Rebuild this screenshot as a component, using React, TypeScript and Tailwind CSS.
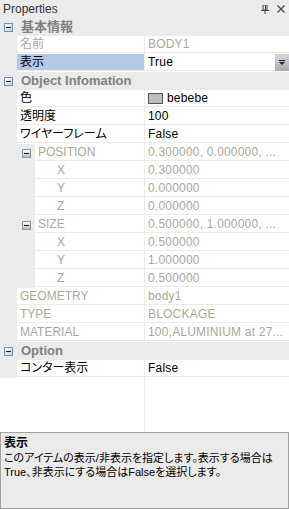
import React from "react";

const FONT = "font-['Liberation_Sans','Noto_Sans_CJK_JP',sans-serif]";
const JP = "text-[12px] [font-feature-settings:'palt']";

function CatIcon() {
  return (
    <svg width="9" height="9" viewBox="0 0 9 9" className="block">
      <defs>
        <linearGradient id="cg" x1="0" y1="0" x2="1" y2="1">
          <stop offset="0" stopColor="#ffffff" />
          <stop offset="1" stopColor="#c8ccd4" />
        </linearGradient>
      </defs>
      <rect x="0.5" y="0.5" width="8" height="8" fill="url(#cg)" stroke="#6f8fb5" />
      <rect x="2" y="4" width="5" height="1" fill="#1a1a1a" />
    </svg>
  );
}

function SubIcon() {
  return (
    <svg width="9" height="9" viewBox="0 0 9 9" className="block">
      <defs>
        <linearGradient id="sg" x1="0" y1="0" x2="0" y2="1">
          <stop offset="0" stopColor="#ffffff" />
          <stop offset="1" stopColor="#c9b58f" />
        </linearGradient>
      </defs>
      <rect x="0.5" y="0.5" width="8" height="8" fill="url(#sg)" stroke="#7b97bd" />
      <rect x="2" y="4" width="5" height="1" fill="#1a1a1a" />
    </svg>
  );
}

function Category({ label }: { label: string }) {
  return (
    <div className="flex h-[18px] items-center bg-[#ebebeb]">
      <div className="w-[17px] flex justify-center">
        <CatIcon />
      </div>
      <span className="pl-[4px] font-bold text-[#808080] text-[13px] [font-feature-settings:'palt']">{label}</span>
    </div>
  );
}

type RowProps = {
  name: string;
  value?: React.ReactNode;
  margin?: number;
  namePad?: string;
  disabled?: boolean;
  selected?: boolean;
  jp?: boolean;
  icon?: boolean;
  dropdown?: boolean;
};

function Row({ name, value, margin = 17, namePad = "pl-[3px]", disabled, selected, jp, icon, dropdown }: RowProps) {
  const color = disabled ? "text-[#aca899]" : "text-black";
  return (
    <div className="flex h-[18px]">
      <div className={(margin === 17 ? "w-[17px]" : "w-[35px]") + " shrink-0 bg-[#ebebeb] flex items-center"}>
        {icon && (
          <div className="ml-[22px]">
            <SubIcon />
          </div>
        )}
      </div>
      <div
        className={
          "flex h-[17px] items-center border-b border-[#ebebeb] shrink-0 " +
          (margin === 17 ? "w-[127px] " : "w-[109px] ") +
          (selected ? "bg-[#b5c9e7] " : "bg-white ") +
          namePad
        }
      >
        <span className={color + " whitespace-nowrap " + (jp ? JP : "text-[12px]")}>{name}</span>
      </div>
      <div className="w-px h-[18px] bg-[#ebebeb]" />
      <div className="flex-1 flex h-[17px] items-center border-b border-[#ebebeb] bg-white pl-[3px] relative">
        <span className={color + " text-[12px] tracking-[0.2px] whitespace-nowrap"}>{value}</span>
        {dropdown && (
          <div className="absolute right-0 top-0 h-[17px] w-[14px] bg-gradient-to-b from-[#d3d6dc] to-[#a7abb3] flex items-center justify-center">
            <svg width="6" height="5" viewBox="0 0 6 5" className="block">
              <rect x="0" y="0" width="6" height="1" fill="#222" />
              <path d="M0 2 H6 L3 5 Z" fill="#222" />
            </svg>
          </div>
        )}
      </div>
    </div>
  );
}

export default function App() {
  return (
    <div className={"w-[289px] h-[509px] bg-[#ebebeb] flex flex-col overflow-hidden " + FONT}>
      {/* Title */}
      <div className="h-[18px] flex items-center justify-between pl-[3px] pr-[3px]">
        <span className="text-[12px] text-[#333]">Properties</span>
        <div className="flex items-center gap-[8px] pr-[1px]">
          <svg width="8" height="9" viewBox="0 0 8 9" className="block">
            <rect x="2" y="0" width="4" height="5" fill="none" stroke="#444" strokeWidth="1" />
            <rect x="4" y="0.5" width="1" height="4.5" fill="#444" />
            <rect x="0" y="5" width="8" height="1" fill="#444" />
            <rect x="3.5" y="6" width="1" height="3" fill="#444" />
          </svg>
          <svg width="8" height="8" viewBox="0 0 8 8" className="block">
            <path d="M0.5 0.5 L7.5 7.5 M7.5 0.5 L0.5 7.5" stroke="#444" strokeWidth="1.2" />
          </svg>
        </div>
      </div>

      {/* Grid */}
      <div className="flex flex-col bg-white">
        <Category label="基本情報" />
        <Row name="名前" jp disabled value="BODY1" />
        <Row name="表示" jp selected value="True" dropdown />
        <Category label="Object Infomation" />
        <Row
          name="色"
          jp
          value={
            <span className="flex items-center gap-[4px]">
              <span className="inline-block w-[15px] h-[11px] bg-[#bebebe] border border-[#555]" />
              <span>bebebe</span>
            </span>
          }
        />
        <Row name="透明度" jp value="100" />
        <Row name="ワイヤーフレーム" jp value="False" />
        <Row name="POSITION" margin={35} icon disabled value="0.300000, 0.000000, ..." />
        <Row name="X" margin={35} namePad="pl-[22px]" disabled value="0.300000" />
        <Row name="Y" margin={35} namePad="pl-[22px]" disabled value="0.000000" />
        <Row name="Z" margin={35} namePad="pl-[22px]" disabled value="0.000000" />
        <Row name="SIZE" margin={35} icon disabled value="0.500000, 1.000000, ..." />
        <Row name="X" margin={35} namePad="pl-[22px]" disabled value="0.500000" />
        <Row name="Y" margin={35} namePad="pl-[22px]" disabled value="1.000000" />
        <Row name="Z" margin={35} namePad="pl-[22px]" disabled value="0.500000" />
        <Row name="GEOMETRY" disabled value="body1" />
        <Row name="TYPE" disabled value="BLOCKAGE" />
        <Row name="MATERIAL" disabled value="100,ALUMINIUM at 27..." />
        <Category label="Option" />
        <Row name="コンター表示" jp value="False" />
      </div>

      {/* Empty grid area */}
      <div className="h-[54px] bg-white flex">
        <div className="w-[144px]" />
        <div className="w-px bg-[#ebebeb]" />
        <div className="flex-1" />
      </div>

      {/* Description */}
      <div className="flex-1 border border-[#a0a0a0] bg-[#ebebeb] px-[3px] pt-[2px]">
        <div className="font-bold text-black text-[12px] [font-feature-settings:'palt'] leading-[16px]">表示</div>
        <div className="text-black text-[11px] [font-feature-settings:'palt'] leading-[14px] whitespace-nowrap">
          このアイテムの表示/非表示を指定します。表示する場合は
          <br />
          True、非表示にする場合はFalseを選択します。
        </div>
      </div>
    </div>
  );
}
